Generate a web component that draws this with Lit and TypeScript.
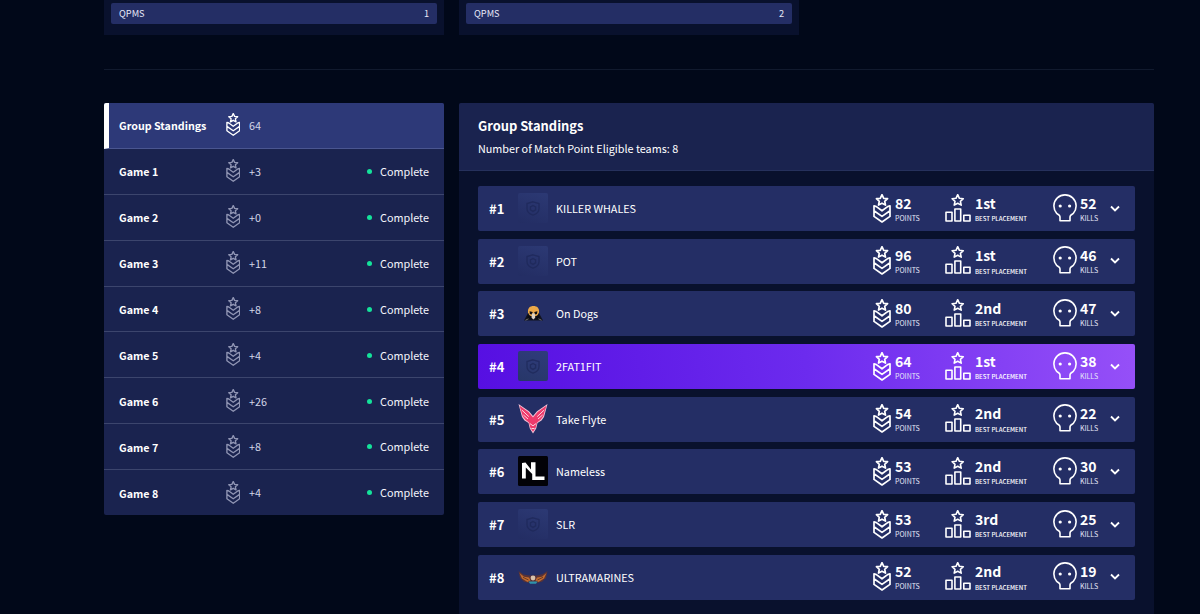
import { LitElement, html, css, svg, nothing } from "lit";
import { customElement, property } from "lit/decorators.js";

const STAR = "M0-5.6 L1.7-2 5.6-1.6 2.7 1 3.5 4.8 0 2.9-3.5 4.8-2.7 1-5.6-1.6-1.7-2Z";

const medal = html`<svg class="medal" viewBox="0 0 18 29" fill="none" stroke="currentColor" stroke-width="1.7" stroke-linejoin="round" stroke-linecap="round">
  <path d=${STAR} transform="translate(9 6.3)"></path>
  <path d="M1 11.8 L3.4 12.6 9 16.8 14.6 12.6 17 11.8 V22.4 L9 28 1 22.4Z M1 16.8 L9 22.4 17 16.8"></path>
</svg>`;
const podium = html`<svg class="podium" viewBox="0 0 26 29" fill="none" stroke="currentColor" stroke-width="1.6" stroke-linejoin="round">
  <path d=${STAR} transform="translate(12.7 6.3)"></path>
  <path d="M1 18.2H7V27H1Z M9.9 15H15.7V27H9.9Z M18.8 21.3H25V27H18.8Z"></path>
</svg>`;
const skull = html`<svg class="skull" viewBox="0 0 24 28" fill="none" stroke="currentColor" stroke-width="1.6" stroke-linejoin="round">
  <path d="M7 26.7V22.8C6.8 20.8 5 20.8 3.6 19.2A11.1 11.1 0 1 1 20.4 19.2C19 20.8 17.2 20.8 17 22.8V26.7Z"></path>
  <circle cx="7.2" cy="12" r="1.6" fill="currentColor" stroke="none"></circle>
  <circle cx="16.6" cy="12" r="1.6" fill="currentColor" stroke="none"></circle>
</svg>`;
const chevron = html`<svg class="chev" viewBox="0 0 10 7" fill="none" stroke="currentColor" stroke-width="1.8"><path d="M1 1.5 L5 5.5 9 1.5"></path></svg>`;

const logos: Record<string, unknown> = {
  shield: svg`<path d="M15 8.8 L21 10.6V15.5C21 19 18.6 21 15 22.2 11.4 21 9 19 9 15.5V10.6Z" fill="none" stroke="#1d2657" stroke-opacity=".7" stroke-width="1.3"/><path d="M15 12.5 L17.6 14V16.8L15 18.4 12.4 16.8V14Z" fill="none" stroke="#1d2657" stroke-opacity=".7" stroke-width="1.3"/>`,
  dogs: svg`<path d="M6 22.6 L9.5 16 11 13H20L21.5 16 25 22.6Z" fill="#11131f"/><path d="M10 14.5C9.5 10 12 8 15.5 8S21.5 10 21 14.5L18.8 18.5H12.2Z" fill="#eba848"/><path d="M11.6 13.2 L14.7 14 14 16.4 11.8 16Z M16.3 14 L19.4 13.2 19 16 16.8 16.4Z M10 17 L13.8 18.3 13.2 21.4 9 21Z M17.2 18.3 L20.8 17 22 21 17.8 21.4Z" fill="#0b0c14"/><path d="M13.9 15.5H16.8L17.2 19.8 15.4 21.6 13.6 19.8Z" fill="#dcd3c8"/><path d="M7.5 22.2 L10.5 20.8M23.5 22.2 L20.5 20.8" stroke="#8c8578" stroke-width=".8"/>`,
  flyte: svg`<path d="M.5 0 L11 7.3 15 12 19 7.3 29.5 0 26 13 23.5 16.5 19.5 19 18.2 24.5 15 29.5 11.8 24.5 10.5 19 6.5 16.5 4 13Z" fill="#f6c3d6"/><path d="M1.6 1.8 L10.3 8 15 13.4 19.7 8 28.4 1.8 25.2 12.2 22.8 15.5 19 18.4 17.6 23.8 15 27.8 12.4 23.8 11 18.4 7.2 15.5 4.8 12.2Z" fill="#ee3a6c"/><path d="M3.8 6 L10.8 12.6M5.4 11 L10 15M26.2 6 L19.2 12.6M24.6 11 L20 15M11.8 19.5 L15 21.8 18.2 19.5M13.5 24.5H16.5" fill="none" stroke="#fbd5e2" stroke-width="1"/>`,
  nl: svg`<rect width="30" height="30" rx="1.5" fill="#020207"/><path d="M4 7 L7.5 6.5 13 13.5V6.3H17.5V20.5H26.5V24H14.2V18L7.8 11.5V22.5H4Z" fill="#fff"/>`,
  wings: svg`<path d="M.5 9 L5.5 12.4 11 13.4H19L24.5 12.3 29.5 9 28 16 24 19.7 18.5 21 11.5 21 6 19.7 2 16Z" fill="#5a3336"/><path d="M1.5 11 L6 14.8 11 15.6 12.5 18.2 9.5 20 4 16.6Z M28.5 11 L24 14.8 19 15.6 17.5 18.2 20.5 20 26 16.6Z" fill="#c26b2d"/><path d="M5 15.3 L10.5 18 M25 15.3 L19.5 18" stroke="#6b3a25" stroke-width="1"/><path d="M10.5 19.5 L12 21.8H18L19.5 19.5Z" fill="#2e93ad"/><circle cx="15" cy="16" r="2.4" fill="#d9c3ac"/>`,
};

interface Team { name: string; logo: string; points: number; place: string; kills: number }
const teams: Team[] = [
  { name: "KILLER WHALES", logo: "shield", points: 82, place: "1st", kills: 52 },
  { name: "POT", logo: "shield", points: 96, place: "1st", kills: 46 },
  { name: "On Dogs", logo: "dogs", points: 80, place: "2nd", kills: 47 },
  { name: "2FAT1FIT", logo: "shield", points: 64, place: "1st", kills: 38 },
  { name: "Take Flyte", logo: "flyte", points: 54, place: "2nd", kills: 22 },
  { name: "Nameless", logo: "nl", points: 53, place: "2nd", kills: 30 },
  { name: "SLR", logo: "shield", points: 53, place: "3rd", kills: 25 },
  { name: "ULTRAMARINES", logo: "wings", points: 52, place: "2nd", kills: 19 },
];
const games = ["+3", "+0", "+11", "+8", "+4", "+26", "+8", "+4"];

@customElement("team-row")
class TeamRow extends LitElement {
  @property({ attribute: false }) team!: Team;
  @property({ type: Number }) rank = 0;
  static styles = css`
    :host { display: grid; grid-template-columns: 29px 38px 1fr 72px 108px 57px 10px; align-items: center;
      height: 45px; box-sizing: border-box; padding: 0 15px 1px 11px; border-radius: 2px; background: #242e65; color: #fff; }
    :host([active]) { background: linear-gradient(80deg, #560fe2, #6c2bee 50%, #9650f8); }
    svg { display: block; flex: none; }
    .rank { font-size: 13px; font-weight: 700; padding-top: 1px; }
    .name { font-size: 10.8px; }
    .logo { width: 30px; height: 30px; }
    .shield { background: linear-gradient(200deg, #2c3974, #232d63); border-radius: 2px; }
    :host([active]) .shield { background: linear-gradient(200deg, #2f3b7c, #273768); }
    .stat { display: flex; gap: 4px; height: 29px; }
    .kills { gap: 3px; }
    .medal { width: 18px; height: 29px; }
    .podium { width: 26px; height: 29px; }
    .skull { width: 24px; height: 28px; }
    .chev { width: 10px; height: 7px; }
    .num { font-size: 14px; font-weight: 700; line-height: 18px; }
    .cap { font-size: 7px; line-height: 9px; padding-top: 2px; white-space: nowrap; color: #e6e8f8; }
    .bold { font-weight: 500; font-size: 6.1px; padding-top: 2.5px; color: #fff; }
  `;
  render() {
    const t = this.team;
    return html`
      <span class="rank">#${this.rank}</span>
      <svg class="logo ${t.logo}" viewBox="0 0 30 30">${logos[t.logo]}</svg>
      <span class="name">${t.name}</span>
      <div class="stat">${medal}<div><div class="num">${t.points}</div><div class="cap">POINTS</div></div></div>
      <div class="stat">${podium}<div><div class="num">${t.place}</div><div class="cap bold">BEST PLACEMENT</div></div></div>
      <div class="stat kills">${skull}<div><div class="num">${t.kills}</div><div class="cap">KILLS</div></div></div>
      ${chevron}`;
  }
}

@customElement("app-root")
class AppRoot extends LitElement {
  static styles = css`
    :host { display: block; height: 614px; overflow: hidden; background: #010819; color: #fff;
      font-family: "Noto Sans CJK SC", "Noto Sans", sans-serif; }
    .wrap { width: 1050px; margin-left: 104px; }
    .top { display: flex; gap: 15px; height: 35px; }
    .card { width: 340px; box-sizing: border-box; padding: 3px 7px 11px; background: #09112d; }
    .pill { height: 21px; box-sizing: border-box; padding: 0 8px 1px; border-radius: 2px; background: #242e65; display: flex;
      justify-content: space-between; align-items: center; font-size: 9.2px; color: #e6e8f8; }
    .rule { height: 1px; background: #111a2e; margin: 34px 0 33px; }
    .cols { display: grid; grid-template-columns: 340px 695px; gap: 15px; align-items: start; }
    .side { background: #1a234f; border-radius: 2px; overflow: hidden; }
    .item { display: grid; grid-template-columns: 106.5px 23.5px 1fr auto; align-items: center; height: 45.9px; box-sizing: border-box;
      padding: 1px 15px 0; border-bottom: 1px solid #3c456d; }
    .item:last-child { border-bottom: 0; height: 45px; }
    .item.sel { background: #2d3978; padding-left: 10px; border-left: 5px solid #fff; border-bottom-color: #4a5690; }
    .label { font-weight: 700; font-size: 10.7px; }
    .medal { width: 14.5px; height: 23px; display: block; color: #9095b4; margin-top: -2px; }
    .sel .medal { color: #fff; }
    .pts { font-size: 10.8px; color: #d3d6e8; padding-bottom: 1.5px; }
    .status { display: flex; align-items: center; gap: 8px; font-size: 10.8px; color: #f4f5fc; padding-bottom: 1.5px; }
    .status::before { content: ""; width: 5px; height: 5px; margin-top: 1px; border-radius: 50%; background: #14e29a; }
    .main { background: #09112d; border-radius: 2px; height: 520px; }
    .head { height: 68px; box-sizing: border-box; padding: 11px 19px 0; background: #1a234f; border-bottom: 1px solid #26315c; border-radius: 2px 2px 0 0; }
    .title { font-size: 12.9px; font-weight: 700; line-height: 23px; }
    .sub { font-size: 10.8px; line-height: 23px; }
    .list { display: flex; flex-direction: column; gap: 7.7px; padding: 15px 19px 0; }
  `;
  item(label: string, pts: string, sel: boolean) {
    return html`<div class="item ${sel ? "sel" : ""}">
      <span class="label">${label}</span>${medal}<span class="pts">${pts}</span>${sel ? nothing : html`<span class="status">Complete</span>`}
    </div>`;
  }
  render() {
    return html`<div class="wrap">
      <div class="top">${[1, 2].map((n) => html`<div class="card"><div class="pill"><span>QPMS</span><span>${n}</span></div></div>`)}</div>
      <div class="rule"></div>
      <div class="cols">
        <div class="side">${this.item("Group Standings", "64", true)}${games.map((g, i) => this.item(`Game ${i + 1}`, g, false))}</div>
        <div class="main">
          <div class="head"><div class="title">Group Standings</div><div class="sub">Number of Match Point Eligible teams: 8</div></div>
          <div class="list">${teams.map((t, i) => html`<team-row .team=${t} .rank=${i + 1} ?active=${i === 3}></team-row>`)}</div>
        </div>
      </div>
    </div>`;
  }
}
